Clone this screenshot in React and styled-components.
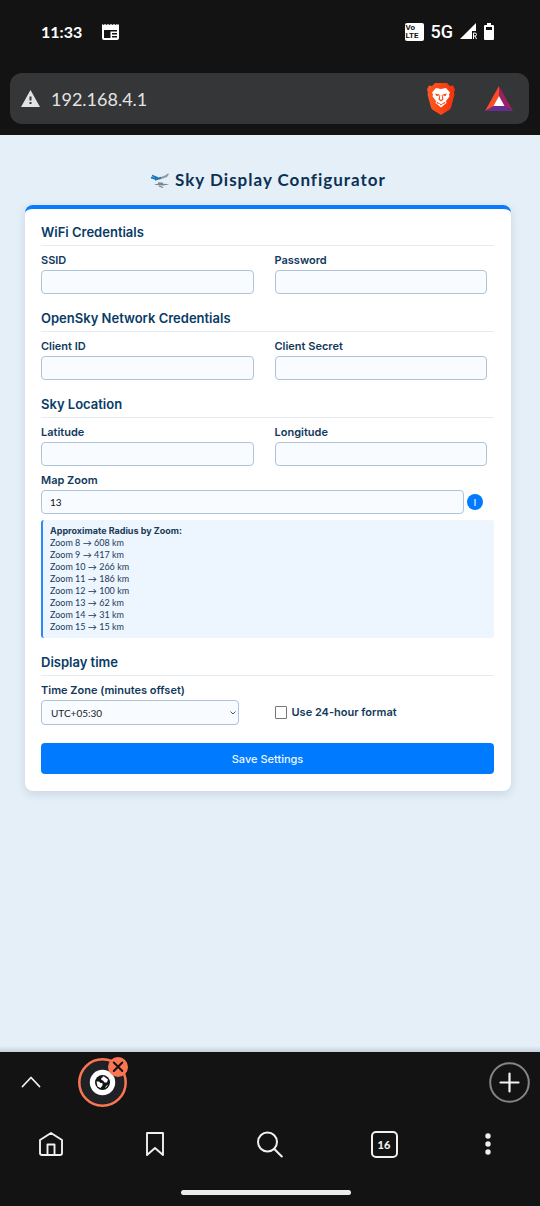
import React from "react";
import styled, { createGlobalStyle } from "styled-components";

const GlobalStyle = createGlobalStyle`
  *, *::before, *::after { box-sizing: border-box; }
  body { margin: 0; background: #131313; font-variant-ligatures: none; }
  body, button, input, select { font-family: Lato, "Liberation Sans", sans-serif; }
  h1, h2, p, ul { margin: 0; padding: 0; }
  svg { display: block; flex: none; }
`;

const formFont = `Inter, "Liberation Sans", sans-serif`;

const Screen = styled.div`
  display: flex;
  flex-direction: column;
  min-height: 100vh;
`;

const BrowserTop = styled.header`
  background: #131313;
  padding: 0 11px 11px 10px;
`;

const StatusBar = styled.div`
  display: flex;
  align-items: center;
  justify-content: space-between;
  height: 73px;
  padding: 0 35px 10px 31px;
  color: #fff;
`;

const StatusGroup = styled.div`
  display: flex;
  align-items: center;
  gap: ${(p) => p.$gap}px;
`;

const Clock = styled.time`
  font-size: 16px;
  font-weight: 700;
  line-height: 20px;
`;

const NetworkType = styled.span`
  font-family: Roboto, sans-serif;
  font-size: 18px;
  font-weight: 500;
  line-height: 20px;
`;

const VolteBadge = styled.span`
  display: flex;
  flex-direction: column;
  width: 19px;
  height: 18px;
  padding: 1px;
  border-radius: 2px;
  background: #fff;
  color: #131313;
  font-family: Roboto, sans-serif;
  font-size: 8px;
  font-weight: 700;
  line-height: 8px;
`;

const AddressBar = styled.div`
  display: flex;
  align-items: center;
  height: 51px;
  padding: 0 16px 0 11px;
  border-radius: 12px;
  background: #353638;
`;

const AddressInput = styled.input`
  flex: 1;
  min-width: 0;
  margin-left: 11px;
  padding: 0;
  border: 0;
  outline: 0;
  background: transparent;
  color: #e3e3e3;
  font-size: 18px;
  line-height: 28px;
`;

const PlainButton = styled.button`
  display: flex;
  align-items: center;
  justify-content: center;
  padding: 0;
  border: 0;
  background: transparent;
  color: #f0f0f0;
  cursor: pointer;
`;

const BarActions = styled.div`
  display: flex;
  align-items: center;
  gap: 30px;
`;

const Page = styled.main`
  flex: 1;
  padding: 33px 29px 24px 25px;
  background: linear-gradient(to top, #c5d1da, #e4eff8 6px);
`;

const Title = styled.h1`
  display: flex;
  align-items: center;
  justify-content: center;
  gap: 5px;
  padding-bottom: 13px;
  color: #0b3154;
  font-size: 17px;
  font-weight: 700;
  line-height: 24px;
  letter-spacing: 1px;
`;

const Card = styled.form`
  display: flex;
  flex-direction: column;
  gap: 15px;
  padding: 14px 17px 17px 16px;
  border-top: 4px solid #0a7aff;
  border-radius: 8px;
  background: #fff;
  box-shadow: 0 3px 10px rgba(20, 50, 80, 0.13);
`;

const Section = styled.section`
  display: flex;
  flex-direction: column;
  gap: 6px;
`;

const SectionTitle = styled.h2`
  padding-bottom: 4px;
  border-bottom: 1px solid #e6ebef;
  color: #083b66;
  font-family: ${formFont};
  font-size: 13px;
  font-weight: 600;
  line-height: 18px;
`;

const Columns = styled.div`
  display: grid;
  grid-template-columns: 1fr 1fr;
  gap: 21px;
  padding-right: 7px;
`;

const Field = styled.div`
  display: flex;
  flex-direction: column;
  gap: 2px;
  padding-right: ${(p) => (p.$inset ? 15 : 0)}px;
`;

const Label = styled.label`
  color: #12395c;
  font-family: ${formFont};
  font-size: 11px;
  font-weight: 600;
  line-height: 16px;
`;

const TextInput = styled.input`
  width: 100%;
  min-width: 0;
  height: 24px;
  padding: 0 8px;
  border: 1px solid #b1c3d6;
  border-radius: 4px;
  background: #f8fbff;
  color: #111;
  font-size: 10px;
`;

const ZoomRow = styled.div`
  display: flex;
  align-items: center;
  gap: 3px;
  padding-right: 11px;
`;

const InfoButton = styled(PlainButton)`
  flex: none;
  width: 16px;
  height: 16px;
  border-radius: 50%;
  background: #007aff;
  color: #fff;
  font-size: 10px;
`;

const RadiusNote = styled.div`
  padding: 5px 7px;
  border-left: 2px solid #2b8af5;
  border-radius: 3px;
  background: #edf5ff;
  color: #1b3b58;
  font-size: 9px;
  line-height: 12px;
`;

const NoteTitle = styled.p`
  font-family: ${formFont};
  font-weight: 700;
`;

const RadiusList = styled.ul`
  list-style: none;
`;

const SelectBox = styled.div`
  display: grid;
  align-items: center;

  > * { grid-area: 1 / 1; }
  > svg { justify-self: end; margin-right: 3px; pointer-events: none; }
`;

const Select = styled.select`
  appearance: none;
  width: 100%;
  height: 25px;
  padding: 0 16px 0 9px;
  border: 1px solid #b1c3d6;
  border-radius: 4px;
  background: #f8fbff;
  color: #222;
  font-size: 10px;
`;

const CheckField = styled.div`
  display: flex;
  align-items: center;
  gap: 5px;
  padding-top: 16px;
`;

const Checkbox = styled.input`
  appearance: none;
  width: 12px;
  height: 13px;
  margin: 2px 0 0;
  border: 1px solid #767676;
  border-radius: 1px;
  background: #fff;

  &:checked { background: #007aff; }
`;

const SaveButton = styled.button`
  height: 31px;
  margin-top: 3px;
  border: 0;
  border-radius: 4px;
  background: #007aff;
  color: #eef6ff;
  font-family: ${formFont};
  font-size: 11px;
  font-weight: 500;
  line-height: 16px;
  cursor: pointer;
`;

const BrowserBottom = styled.footer`
  padding: 6px 8px 11px 0;
  background: #131313;
`;

const TabStrip = styled.div`
  display: flex;
  align-items: center;
  height: 48px;
  padding: 0 2px 0 21px;
`;

const TabBubble = styled(PlainButton)`
  margin: 0 auto 0 37px;
`;

const NavBar = styled.nav`
  display: grid;
  grid-template-columns: 88fr 120fr 109fr 120fr 88fr;
  align-items: center;
  justify-items: center;
  height: 76px;
  padding-left: 7px;
`;

const TabCount = styled(PlainButton)`
  width: 27px;
  height: 27px;
  border: 2px solid #f0f0f0;
  border-radius: 5px;
  font-size: 11px;
  font-weight: 900;
`;

const HomeIndicator = styled.div`
  width: 170px;
  height: 5px;
  margin: 8px auto 0;
  border-radius: 3px;
  background: #ececec;
`;

const NewsIcon = () => (
  <svg width="17" height="16" viewBox="0 0 17 16" fill="none">
    <path d="M0 0l1.500 1L3 0l1.500 1L6 0l1.500 1L9 0l1.500 1L12 0l1.500 1L15 0l1 1 1-1v14q0 2-2 2H2q-2 0-2-2z" fill="#fff" />
    <path d="M2 6h13v1.500H8.500V14H2zM10 9h5v1.500h-5zM10 12h5v1.500h-5z" fill="#131313" />
  </svg>
);

const SignalIcon = () => (
  <svg width="17" height="17" viewBox="0 0 17 17">
    <path d="M0 16L16 0v8h-4v8z" fill="#fff" />
    <path d="M13.500 16v-6h1.500a1.500 1.500 0 0 1 0 3h-1.500m1.500 0l1.500 3" fill="none" stroke="#fff" strokeWidth="1" />
  </svg>
);

const BatteryIcon = () => (
  <svg width="10" height="17" viewBox="0 0 10 17">
    <path d="M3 0h4v2h2q1 0 1 1v13q0 1-1 1H1q-1 0-1-1V3q0-1 1-1h2z" fill="#fff" />
    <path d="M2 4h6v3H2z" fill="#131313" />
  </svg>
);

const WarningIcon = () => (
  <svg width="19" height="17" viewBox="0 0 19 17">
    <path d="M9.500 0L19 17H0z" fill="#e3e3e3" />
    <path d="M8.500 6.500h2v4h-2zM8.500 12h2v2h-2z" fill="#353638" />
  </svg>
);

const BraveIcon = () => (
  <svg width="28" height="33" viewBox="0 0 28 33">
    <defs>
      <linearGradient id="brave" x1="0" x2="1">
        <stop offset="0" stopColor="#ff5a20" />
        <stop offset="1" stopColor="#f5300b" />
      </linearGradient>
    </defs>
    <path d="M8 1h12l3 3 3-.5 2 4-1 3 .500 2-3.500 13q-.500 1.500-2 2.500L14 33l-8-5q-1.500-1-2-2.500L.500 12.500l.500-2-1-3 2-4L5 4z" fill="url(#brave)" />
    <path d="M9 6l5 1 5-1 4 4.500-1 2 .500 2-3.500 4.500.500 2-2 1.500-3.500 3-3.500-3-2-1.500.500-2-3.500-4.500.500-2-1-2z" fill="#fff" />
    <path d="M8 11.500l4.500 1-1 1.200-2 .300zM20 11.500l-4.500 1 1 1.200 2 .300zM12.500 13h.800l-.500 4 1.200 1 1.200-1-.500-4h.800l1 4.500-2.500 2-2.500-2zM9.500 19.500l2.500 1.500 2 1.200 2-1.200 2.500-1.500-.500 2-2 .300-2 1.700-2-1.700-2-.300z" fill="#f84a1b" />
  </svg>
);

const BatIcon = () => (
  <svg width="28" height="25" viewBox="0 0 28 25">
    <path d="M14 0v10l-5 10-9 5z" fill="#ff4b24" />
    <path d="M14 0l14 25-9-5-5-10z" fill="#9e1f63" />
    <path d="M0 25l9-5h10l9 5z" fill="#662d91" />
    <path d="M14 10l5.500 10h-11z" fill="#fff" />
  </svg>
);

const PlanesIcon = () => (
  <svg width="20" height="16" viewBox="0 0 20 16" fill="none">
    <path d="M1 5.500l5 1 8-2.500 4-2.500 1 .500-2 3-7 2.500-4 .500-5-1.500z" fill="#8b9aa5" />
    <path d="M2 3.500l6 2.500M5 8l6-2.500M1 5.500l5 1.200" stroke="#1976b8" strokeWidth="1.500" />
    <path d="M4 12.500l5-1 8 .500 2 .500-6 1-7-.500z" fill="#7b858c" />
    <path d="M8 11l5 .500M9 14l4 1.500" stroke="#7b858c" strokeWidth="1.300" />
  </svg>
);

const SelectArrow = () => (
  <svg width="6" height="4" viewBox="0 0 6 4" fill="none" stroke="#555">
    <path d="M.500.500L3 3 5.500.500" />
  </svg>
);

const ChevronUpIcon = () => (
  <svg width="20" height="12" viewBox="0 0 20 12" fill="none" stroke="currentColor" strokeWidth="1.800" strokeLinecap="round" strokeLinejoin="round">
    <path d="M1.500 10.500L10 1.500l8.500 9" />
  </svg>
);

const TabBubbleIcon = () => (
  <svg width="51" height="50" viewBox="0 0 51 50">
    <circle cx="24.500" cy="25.500" r="23.200" fill="#202124" stroke="#fb7553" strokeWidth="2.500" />
    <circle cx="24.500" cy="25.500" r="12.700" fill="#fff" />
    <circle cx="24.500" cy="25.500" r="7.500" fill="#131313" />
    <path d="M18.500 24.500h2.500l1.500 1.500h2v2.500l-2 2.500-3-1.500zM24.500 19.500l1.500 0 4 3-1 3-2.500 0-1.500-2-1.500-.500-.500-1.500 1.500-1z" fill="#fff" />
    <path d="M27 31.500l1-2.500 2.500-1.500z" fill="#fff" />
    <circle cx="40" cy="10" r="10" fill="#fb7553" />
    <path d="M35.800 5.500l8.500 8.500m0-8.500l-8.500 8.500" stroke="#131313" strokeWidth="2" strokeLinecap="round" />
  </svg>
);

const NewTabIcon = () => (
  <svg width="41" height="41" viewBox="0 0 41 41" fill="none">
    <circle cx="20.500" cy="20.500" r="19.300" stroke="#858585" strokeWidth="2" />
    <path d="M20.500 11.500v18M11.500 20.500h18" stroke="#f3f3f3" strokeWidth="2.200" strokeLinecap="round" />
  </svg>
);

const HomeIcon = () => (
  <svg width="24" height="24" viewBox="0 0 24 24" fill="none" stroke="currentColor" strokeWidth="1.900" strokeLinejoin="round">
    <path d="M1 8L12 1l11 7v13q0 2-2 2H3q-2 0-2-2zM8.500 23V12.500h7V23" />
  </svg>
);

const BookmarkIcon = () => (
  <svg width="18" height="24" viewBox="0 0 18 24" fill="none" stroke="currentColor" strokeWidth="1.900" strokeLinejoin="round">
    <path d="M1 1h16v22l-8-7-8 7z" />
  </svg>
);

const SearchIcon = () => (
  <svg width="26" height="27" viewBox="0 0 26 27" fill="none" stroke="currentColor" strokeWidth="2" strokeLinecap="round">
    <circle cx="10.500" cy="11" r="9.500" />
    <path d="M17.300 18l7.500 7.500" />
  </svg>
);

const MenuIcon = () => (
  <svg width="6" height="22" viewBox="0 0 6 22" fill="currentColor">
    <circle cx="3" cy="3" r="2.700" />
    <circle cx="3" cy="11" r="2.700" />
    <circle cx="3" cy="19" r="2.700" />
  </svg>
);

const RADII = [
  [8, 608], [9, 417], [10, 266], [11, 186],
  [12, 100], [13, 62], [14, 31], [15, 15],
];

function TextField({ id, label, type = "text" }) {
  return (
    <Field>
      <Label htmlFor={id}>{label}</Label>
      <TextInput id={id} type={type} />
    </Field>
  );
}

export default function App() {
  return (
    <Screen>
      <GlobalStyle />
      <BrowserTop>
        <StatusBar>
          <StatusGroup $gap={20}>
            <Clock>11:33</Clock>
            <NewsIcon />
          </StatusGroup>
          <StatusGroup $gap={7}>
            <VolteBadge><span>Vo</span><span>LTE</span></VolteBadge>
            <NetworkType>5G</NetworkType>
            <SignalIcon />
            <BatteryIcon />
          </StatusGroup>
        </StatusBar>
        <AddressBar>
          <WarningIcon />
          <AddressInput aria-label="Address" defaultValue="192.168.4.1" />
          <BarActions>
            <PlainButton aria-label="Brave Shields"><BraveIcon /></PlainButton>
            <PlainButton aria-label="Brave Rewards"><BatIcon /></PlainButton>
          </BarActions>
        </AddressBar>
      </BrowserTop>

      <Page>
        <Title><PlanesIcon />Sky Display Configurator</Title>
        <Card onSubmit={(e) => e.preventDefault()}>
          <Section>
            <SectionTitle>WiFi Credentials</SectionTitle>
            <Columns>
              <TextField id="ssid" label="SSID" />
              <TextField id="password" label="Password" type="password" />
            </Columns>
          </Section>
          <Section>
            <SectionTitle>OpenSky Network Credentials</SectionTitle>
            <Columns>
              <TextField id="client-id" label="Client ID" />
              <TextField id="client-secret" label="Client Secret" type="password" />
            </Columns>
          </Section>
          <Section>
            <SectionTitle>Sky Location</SectionTitle>
            <Columns>
              <TextField id="latitude" label="Latitude" />
              <TextField id="longitude" label="Longitude" />
            </Columns>
            <Field>
              <Label htmlFor="zoom">Map Zoom</Label>
              <ZoomRow>
                <TextInput id="zoom" defaultValue="13" />
                <InfoButton type="button">I</InfoButton>
              </ZoomRow>
            </Field>
            <RadiusNote>
              <NoteTitle>Approximate Radius by Zoom:</NoteTitle>
              <RadiusList>
                {RADII.map(([zoom, km]) => (
                  <li key={zoom}>{`Zoom ${zoom} → ${km} km`}</li>
                ))}
              </RadiusList>
            </RadiusNote>
          </Section>
          <Section>
            <SectionTitle>Display time</SectionTitle>
            <Columns>
              <Field $inset>
                <Label htmlFor="timezone">Time Zone (minutes offset)</Label>
                <SelectBox>
                  <Select id="timezone" defaultValue="330">
                    <option value="330">UTC+05:30</option>
                  </Select>
                  <SelectArrow />
                </SelectBox>
              </Field>
              <CheckField>
                <Checkbox id="format24" type="checkbox" />
                <Label htmlFor="format24">Use 24-hour format</Label>
              </CheckField>
            </Columns>
          </Section>
          <SaveButton type="submit">Save Settings</SaveButton>
        </Card>
      </Page>

      <BrowserBottom>
        <TabStrip>
          <PlainButton aria-label="Expand tabs"><ChevronUpIcon /></PlainButton>
          <TabBubble aria-label="Close tab"><TabBubbleIcon /></TabBubble>
          <PlainButton aria-label="New tab"><NewTabIcon /></PlainButton>
        </TabStrip>
        <NavBar>
          <PlainButton aria-label="Home"><HomeIcon /></PlainButton>
          <PlainButton aria-label="Bookmarks"><BookmarkIcon /></PlainButton>
          <PlainButton aria-label="Search"><SearchIcon /></PlainButton>
          <TabCount>16</TabCount>
          <PlainButton aria-label="Menu"><MenuIcon /></PlainButton>
        </NavBar>
        <HomeIndicator />
      </BrowserBottom>
    </Screen>
  );
}
